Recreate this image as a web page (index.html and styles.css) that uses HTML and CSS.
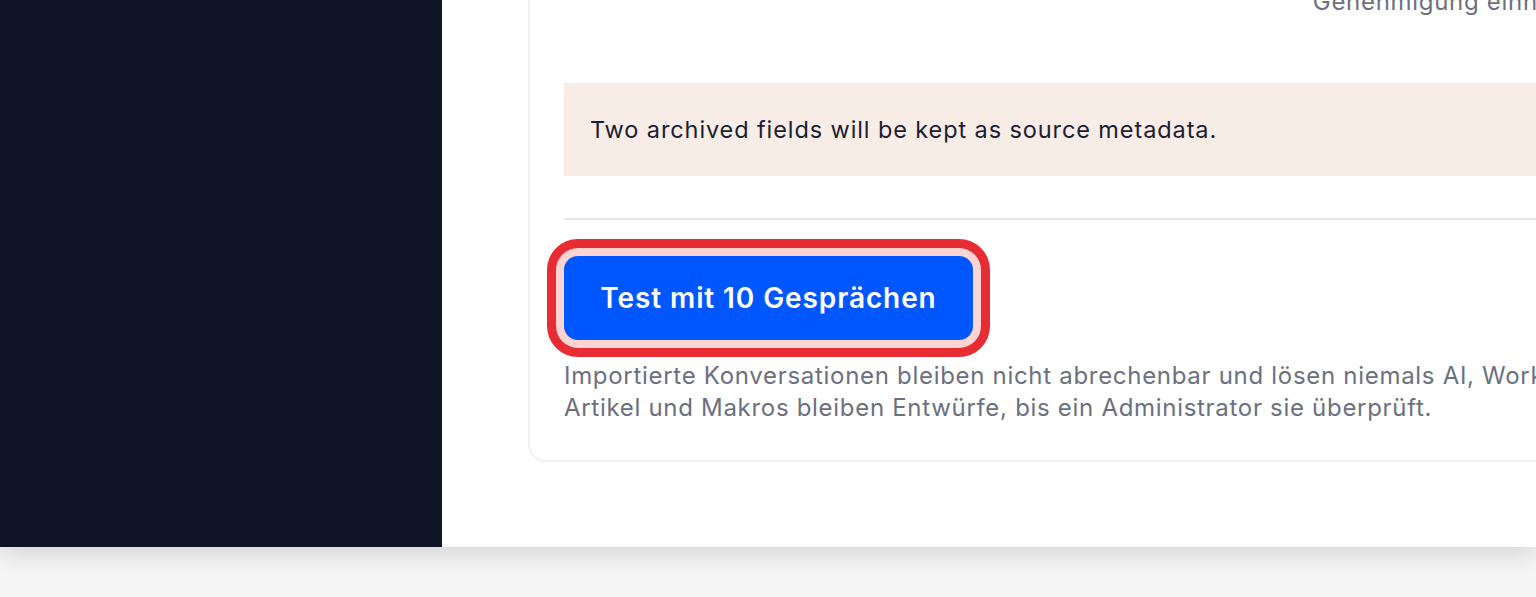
FILE: index.html
```html
<!DOCTYPE html>
<html lang="de">
<head>
<meta charset="utf-8">
<title>Import</title>
<link rel="stylesheet" href="styles.css">
</head>
<body>
<div class="window">
  <aside class="sidebar"></aside>
  <main class="main">
    <section class="card">
      <div class="meta-row">
        <span class="meta">Genehmigung einholen</span>
      </div>
      <div class="notice">Two archived fields will be kept as source metadata.</div>
      <hr class="divider">
      <div class="actions">
        <button class="btn-primary" type="button">Test mit 10 Gesprächen</button>
      </div>
      <p class="help">
        <span class="help-line">Importierte Konversationen bleiben nicht abrechenbar und lösen niemals AI, Workflows oder Benachrichtigungen aus.</span>
        <span class="help-line">Artikel und Makros bleiben Entwürfe, bis ein Administrator sie überprüft.</span>
      </p>
    </section>
  </main>
</div>
</body>
</html>
```

FILE: styles.css
```css
* { box-sizing: border-box; }

html, body {
  margin: 0;
  height: 100%;
}

body {
  background: #f5f5f5;
  font-family: Inter, "Noto Sans", "Liberation Sans", sans-serif;
  overflow: hidden;
}

.window {
  display: flex;
  height: 547px;
  box-shadow: 0 6px 26px rgba(0, 0, 0, 0.14);
}

.sidebar {
  width: 442px;
  flex: none;
  background: #0f1427;
}

.main {
  flex: 1;
  background: #ffffff;
  overflow: hidden;
  padding-left: 86px;
}

.card {
  width: 1099px;
  margin-top: -46px;
  border: 2px solid #eff1f4;
  border-radius: 18px;
  padding: 0 36px 36px 34px;
}

.meta-row {
  display: flex;
  justify-content: flex-end;
  padding-top: 30px;
  height: 113px;
}

.meta {
  font-size: 24px;
  line-height: 32px;
  letter-spacing: 0.7px;
  color: #6b7080;
  white-space: nowrap;
}

.notice {
  margin-top: 14px;
  height: 93px;
  display: flex;
  align-items: center;
  padding: 0 26px;
  background: #f8ece6;
  color: #1a2033;
  font-size: 23.5px;
  letter-spacing: 0.9px;
  white-space: nowrap;
}

.divider {
  margin: 42px 0 0;
  border: 0;
  height: 2px;
  background: #e4e6eb;
}

.actions {
  padding-top: 36px;
}

.btn-primary {
  width: 409px;
  height: 84px;
  border: 0;
  border-radius: 14px;
  background: #0057ff;
  color: #ffffff;
  font-family: inherit;
  font-size: 28px;
  font-weight: 600;
  letter-spacing: 0.9px;
  box-shadow: 0 0 0 8px #fcd4d4, 0 0 0 17px #e82c33;
  cursor: pointer;
}

.help {
  margin: 20px 0 0;
  font-size: 24px;
  line-height: 32px;
  letter-spacing: 0.7px;
  color: #6b7080;
}

.help-line {
  display: block;
  white-space: nowrap;
}
```
